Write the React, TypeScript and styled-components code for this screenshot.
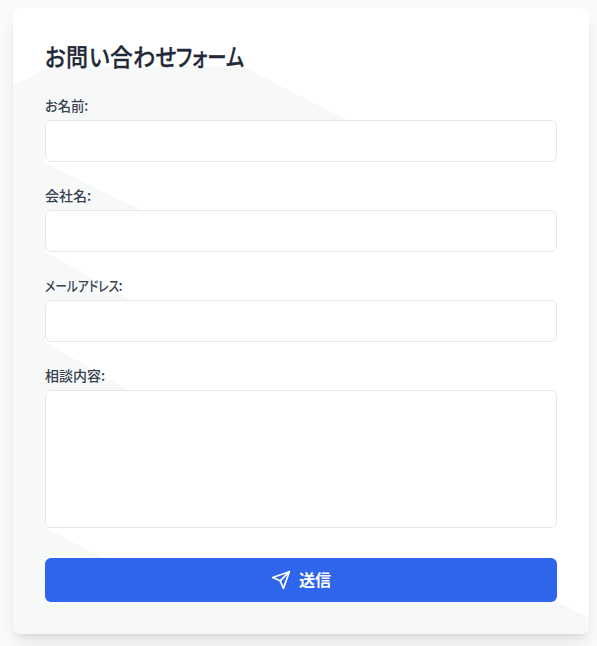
import React from "react";
import styled, { createGlobalStyle } from "styled-components";

const Global = createGlobalStyle`
  * { box-sizing: border-box; }
  body {
    margin: 0;
    background: #f9fafb;
    font-family: "Noto Sans CJK JP", sans-serif;
    font-feature-settings: "palt";
  }
`;

const Page = styled.main`
  min-height: 646px;
  padding: 8px 8px 12px 13px;
`;

const Shadow = styled.div`
  border-radius: 8px;
  box-shadow: 0 10px 15px -3px rgba(0, 0, 0, 0.1), 0 4px 6px -4px rgba(0, 0, 0, 0.1);
`;

const Card = styled.form`
  position: relative;
  isolation: isolate;
  display: flex;
  flex-direction: column;
  height: 626px;
  padding: 32px;
  overflow: hidden;
  border-radius: 8px;
  background: #fff;
`;

const Tint = styled.svg`
  position: absolute;
  inset: 0;
  z-index: -1;
  fill: #f7f9f8;
`;

const Title = styled.h1`
  display: flex;
  height: 32px;
  margin: 0 0 24px;
  color: #1f2937;
  font-size: 24px;
  font-weight: 500;
  line-height: 32px;
  white-space: nowrap;
  -webkit-text-stroke: 0.3px currentColor;
`;

/* A run of glyphs condensed horizontally into a fixed width. */
const Run = styled.span<{ $width: number; $scale: number }>`
  display: inline-block;
  flex: none;
  width: ${(p) => p.$width}px;
  transform: scaleX(${(p) => p.$scale});
  transform-origin: left center;
`;

const Field = styled.div<{ $gap?: number }>`
  display: flex;
  flex-direction: column;
  margin-bottom: ${(p) => p.$gap ?? 24}px;
`;

const Label = styled.label`
  display: flex;
  height: 24px;
  color: #374151;
  font-size: 14px;
  font-weight: 500;
  line-height: 18px;
  white-space: nowrap;
`;

const Input = styled.input`
  width: 100%;
  height: 42px;
  padding: 8px 16px;
  border: 1px solid #e5e7eb;
  border-radius: 6px;
  outline: none;
  background: #fff;
  font: inherit;
`;

const TextArea = styled(Input).attrs({ as: "textarea" })`
  display: block;
  height: 138px;
  resize: none;
`;

const Submit = styled.button`
  display: flex;
  align-items: center;
  justify-content: center;
  gap: 8px;
  height: 44px;
  padding: 0;
  border: 0;
  border-radius: 6px;
  background-color: #2f64ed;
  background-image:
    radial-gradient(circle at 3.5px 2.5px, #4070ef 0.6px, transparent 0.7px),
    radial-gradient(circle at 0.5px 12.5px, #4070ef 0.6px, transparent 0.7px);
  background-size: 6px 20px;
  background-position: 0 10px;
  color: #fff;
  font-family: inherit;
  font-size: 16px;
  font-weight: 700;
  line-height: 24px;
`;

const SubmitText = styled.span`
  height: 26px;
`;

const titleRuns = [
  { text: "お", width: 21, scale: 0.9 },
  { text: "問", width: 23, scale: 0.92 },
  { text: "い", width: 20.5, scale: 0.9 },
  { text: "合", width: 23, scale: 0.95 },
  { text: "わせ", width: 43, scale: 0.92 },
  { text: "フォーム", width: 67, scale: 0.81 },
];

const fields = [
  { id: "name", runs: [{ text: "お名前:", width: 43, scale: 0.95 }] },
  { id: "company", runs: [{ text: "会社名:", width: 45, scale: 1 }] },
  {
    id: "email",
    runs: [
      { text: "メールアドレス", width: 73.5, scale: 0.84 },
      { text: ":", width: 4, scale: 1 },
    ],
  },
];

export default function App() {
  return (
    <Page>
      <Global />
      <Shadow>
        <Card onSubmit={(e) => e.preventDefault()}>
          <Tint width="576" height="626" viewBox="0 0 576 626" aria-hidden="true">
            <path d="M0 78 L32 61 L80 58 L228 58 L334 112 L32 112 V155 L128 202 H32 V244 L118 292 H32 V334 L115 382 H32 V520 L91 550 V594 H544 L576 610 V626 H0Z" />
          </Tint>
          <Title>
            {titleRuns.map((r) => (
              <Run key={r.text} $width={r.width} $scale={r.scale}>{r.text}</Run>
            ))}
          </Title>
          {fields.map((f) => (
            <Field key={f.id}>
              <Label htmlFor={f.id}>
                {f.runs.map((r) => (
                  <Run key={r.text} $width={r.width} $scale={r.scale}>{r.text}</Run>
                ))}
              </Label>
              <Input id={f.id} />
            </Field>
          ))}
          <Field $gap={30}>
            <Label htmlFor="message">相談内容:</Label>
            <TextArea id="message" />
          </Field>
          <Submit type="submit">
            <svg width="20" height="20" viewBox="0 0 24 24" fill="none" stroke="currentColor" strokeWidth="2" strokeLinecap="round" strokeLinejoin="round">
              <path d="m22 2-7 20-4-9-9-4Z" />
              <path d="M22 2 11 13" />
            </svg>
            <SubmitText>送信</SubmitText>
          </Submit>
        </Card>
      </Shadow>
    </Page>
  );
}
